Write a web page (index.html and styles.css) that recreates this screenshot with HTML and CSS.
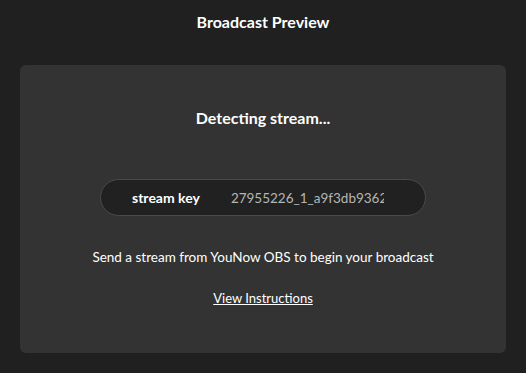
FILE: index.html
```html
<!DOCTYPE html>
<html lang="en">
<head>
  <meta charset="UTF-8">
  <meta name="viewport" content="width=device-width, initial-scale=1.0">
  <title>Broadcast Preview</title>
  <link rel="stylesheet" href="styles.css">
</head>
<body>
  <div class="preview">
    <h1 class="title">Broadcast Preview</h1>
    <div class="card">
      <h2 class="status">Detecting stream...</h2>
      <div class="key-pill">
        <span class="key-label">stream key</span>
        <span class="key-value">27955226_1_a9f3db9362c4e1f07b</span>
      </div>
      <p class="hint">Send a stream from YouNow OBS to begin your broadcast</p>
      <a href="#" class="instructions">View Instructions</a>
    </div>
  </div>
</body>
</html>
```

FILE: styles.css
```css
* {
  box-sizing: border-box;
}

body {
  margin: 0;
  padding: 0;
  background-color: #202020;
  font-family: Lato, "Liberation Sans", sans-serif;
  color: #ffffff;
}

.preview {
  width: 526px;
  height: 373px;
  padding: 12px 20px 0;
  display: flex;
  flex-direction: column;
  align-items: center;
}

.title {
  margin: 0;
  font-size: 16px;
  font-weight: 700;
  line-height: 20px;
}

.card {
  margin-top: 33px;
  width: 486px;
  height: 288px;
  background-color: #333333;
  border-radius: 6px;
  display: flex;
  flex-direction: column;
  align-items: center;
  padding-top: 43px;
}

.status {
  margin: 0;
  font-size: 16px;
  font-weight: 700;
  line-height: 20px;
}

.key-pill {
  margin-top: 51px;
  width: 326px;
  height: 37px;
  border: 1px solid #4a4a4a;
  border-radius: 19px;
  background-color: #212121;
  display: flex;
  align-items: center;
  padding-left: 31px;
  overflow: hidden;
}

.key-label {
  font-size: 14px;
  font-weight: 700;
  flex-shrink: 0;
}

.key-value {
  margin-left: 31px;
  width: 153px;
  overflow: hidden;
  white-space: nowrap;
  font-size: 13.5px;
  color: #b5b5b5;
}

.hint {
  margin: 33px 0 0;
  font-size: 13.5px;
  line-height: 17px;
}

.instructions {
  margin-top: 24px;
  font-size: 13px;
  color: #ffffff;
  text-decoration: underline;
}
```
